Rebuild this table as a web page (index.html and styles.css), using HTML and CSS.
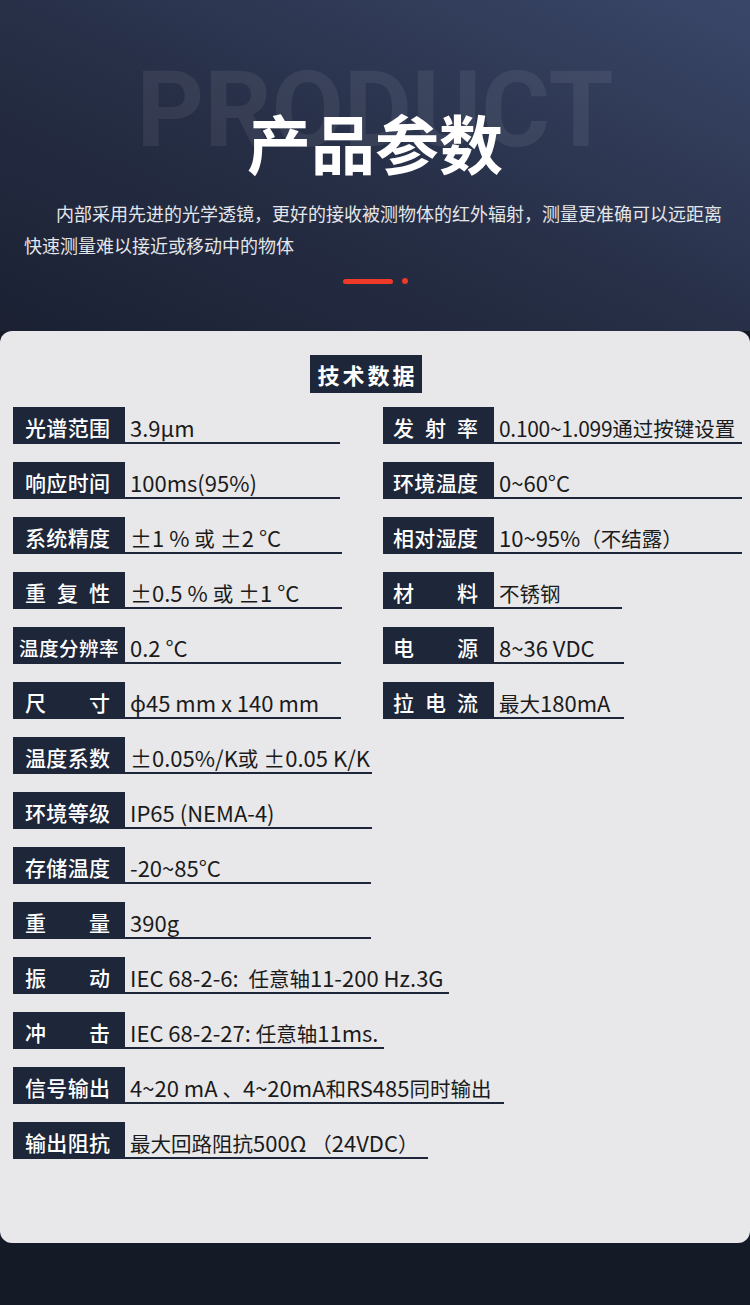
FILE: index.html
```html
<!DOCTYPE html>
<html lang="zh-CN">
<head>
<meta charset="utf-8">
<title>产品参数</title>
<link rel="stylesheet" href="styles.css">
</head>
<body>
<div class="page">
  <header class="hero">
    <div class="watermark" aria-hidden="true">PRODUCT</div>
    <h1 class="hero-title">产品参数</h1>
    <p class="hero-text">内部采用先进的光学透镜，更好的接收被测物体的红外辐射，测量更准确可以远距离快速测量难以接近或移动中的物体</p>
    <div class="deco"><span class="deco-bar"></span><span class="deco-dot"></span></div>
  </header>

  <section class="card">
    <div class="card-title">技术数据</div>
    <div class="cols">
      <div class="col">
        <div class="row"><div class="label">光谱范围</div><div class="value w215">3.9µm</div></div>
        <div class="row"><div class="label">响应时间</div><div class="value w215">100ms(95%)</div></div>
        <div class="row"><div class="label">系统精度</div><div class="value w217">±1 % <span class="zh">或</span> ±2 °C</div></div>
        <div class="row"><div class="label">重复性</div><div class="value w217">±0.5 % <span class="zh">或</span> ±1 °C</div></div>
        <div class="row"><div class="label small">温度分辨率</div><div class="value w216">0.2 °C</div></div>
        <div class="row"><div class="label">尺寸</div><div class="value w216">ϕ45 mm x 140 mm</div></div>
        <div class="row"><div class="label">温度系数</div><div class="value w247">±0.05%/K<span class="zh">或</span> ±0.05 K/K</div></div>
        <div class="row"><div class="label">环境等级</div><div class="value w247">IP65 (NEMA-4)</div></div>
        <div class="row"><div class="label">存储温度</div><div class="value w246">-20~85°C</div></div>
        <div class="row"><div class="label">重量</div><div class="value w246">390g</div></div>
        <div class="row"><div class="label">振动</div><div class="value w324">IEC 68-2-6:&nbsp; <span class="zh">任意轴</span>11-200 Hz.3G</div></div>
        <div class="row"><div class="label">冲击</div><div class="value w259">IEC 68-2-27: <span class="zh">任意轴</span>11ms.</div></div>
        <div class="row"><div class="label">信号输出</div><div class="value w379">4~20 mA <span class="zh">、</span>4~20mA<span class="zh">和</span>RS485<span class="zh">同时输出</span></div></div>
        <div class="row"><div class="label">输出阻抗</div><div class="value w303"><span class="zh">最大回路阻抗</span>500Ω <span class="zh">（</span>24VDC<span class="zh">）</span></div></div>
      </div>
      <div class="col">
        <div class="row"><div class="label r">发射率</div><div class="value w248"><span class="tight">0.100~1.099</span><span class="zh">通过按键设置</span></div></div>
        <div class="row"><div class="label r">环境温度</div><div class="value w248">0~60°C</div></div>
        <div class="row"><div class="label r">相对湿度</div><div class="value w248">10~95%<span class="zh">（不结露）</span></div></div>
        <div class="row"><div class="label r">材料</div><div class="value w128"><span class="zh">不锈钢</span></div></div>
        <div class="row"><div class="label r">电源</div><div class="value w130">8~36 VDC</div></div>
        <div class="row"><div class="label r">拉电流</div><div class="value w130"><span class="zh">最大</span>180mA</div></div>
      </div>
    </div>
  </section>
</div>
</body>
</html>
```

FILE: styles.css
```css
* { box-sizing: border-box; }

html, body {
  margin: 0;
  padding: 0;
}

body {
  background: #151a27;
  font-family: "Noto Sans CJK SC", "Noto Sans", sans-serif;
}

.page {
  width: 750px;
  min-height: 1305px;
  background: #151a27;
}

.hero {
  position: relative;
  height: 331px;
  padding-top: 109px;
  background: linear-gradient(to top right, #1b2133 0%, #262e45 45%, #3a4769 100%);
  overflow: hidden;
}

.watermark {
  position: absolute;
  left: 0;
  right: 0;
  top: 48px;
  text-align: center;
  font-family: Roboto, "Liberation Sans", sans-serif;
  font-weight: 700;
  font-size: 105px;
  line-height: 1.2;
  color: rgba(255, 255, 255, 0.07);
}

.hero-title {
  position: relative;
  margin: 0;
  text-align: center;
  font-size: 64px;
  line-height: 64px;
  font-weight: 700;
  color: #ffffff;
}

.hero-text {
  position: relative;
  margin: 24px 0 0;
  padding: 0 26px 0 24px;
  text-indent: 32px;
  font-size: 18px;
  line-height: 32px;
  letter-spacing: 0;
  color: #e4e6ea;
}

.deco {
  display: flex;
  justify-content: center;
  align-items: center;
  gap: 9px;
  margin-top: 17px;
}

.deco-bar {
  width: 50px;
  height: 5px;
  border-radius: 3px;
  background: #ee3a28;
}

.deco-dot {
  width: 6px;
  height: 6px;
  border-radius: 50%;
  background: #ee3a28;
}

.card {
  height: 912px;
  background: #e8e8ea;
  border-radius: 12px;
  padding-top: 24px;
}

.card-title {
  width: 112px;
  height: 38px;
  margin-left: 310px;
  background: #1e2639;
  color: #ffffff;
  font-size: 22px;
  font-weight: 700;
  line-height: 38px;
  text-align: center;
  letter-spacing: 3px;
  padding-left: 3px;
}

.cols {
  display: grid;
  grid-template-columns: 370px 1fr;
  margin-top: 14px;
  padding-left: 13px;
}

.col {
  display: flex;
  flex-direction: column;
  gap: 18px;
}

.row {
  display: flex;
  height: 37px;
}

.label {
  flex: 0 0 112px;
  height: 37px;
  background: #1e2639;
  color: #ffffff;
  font-size: 21px;
  font-weight: 500;
  line-height: 33px;
  padding: 4px 15px 0 12px;
  text-align: justify;
  text-align-last: justify;
  white-space: nowrap;
}

.label.r {
  flex-basis: 111px;
  padding: 4px 16px 0 10px;
}

.label.small {
  font-size: 19.5px;
  letter-spacing: -0.6px;
  padding: 4px 7px 0 6px;
}

.value {
  flex: 0 0 auto;
  height: 37px;
  border-bottom: 2px solid #1e2639;
  padding: 4px 0 0 5px;
  font-size: 22px;
  line-height: 33px;
  color: #1b1b1b;
  white-space: nowrap;
}

.zh {
  font-size: 20.5px;
}

.tight {
  font-size: 21px;
  letter-spacing: -0.3px;
}

.w128 { width: 128px; }
.w130 { width: 130px; }
.w215 { width: 215px; }
.w216 { width: 216px; }
.w217 { width: 217px; }
.w246 { width: 246px; }
.w247 { width: 247px; }
.w248 { width: 248px; }
.w259 { width: 259px; }
.w303 { width: 303px; }
.w324 { width: 324px; }
.w379 { width: 379px; }
```
